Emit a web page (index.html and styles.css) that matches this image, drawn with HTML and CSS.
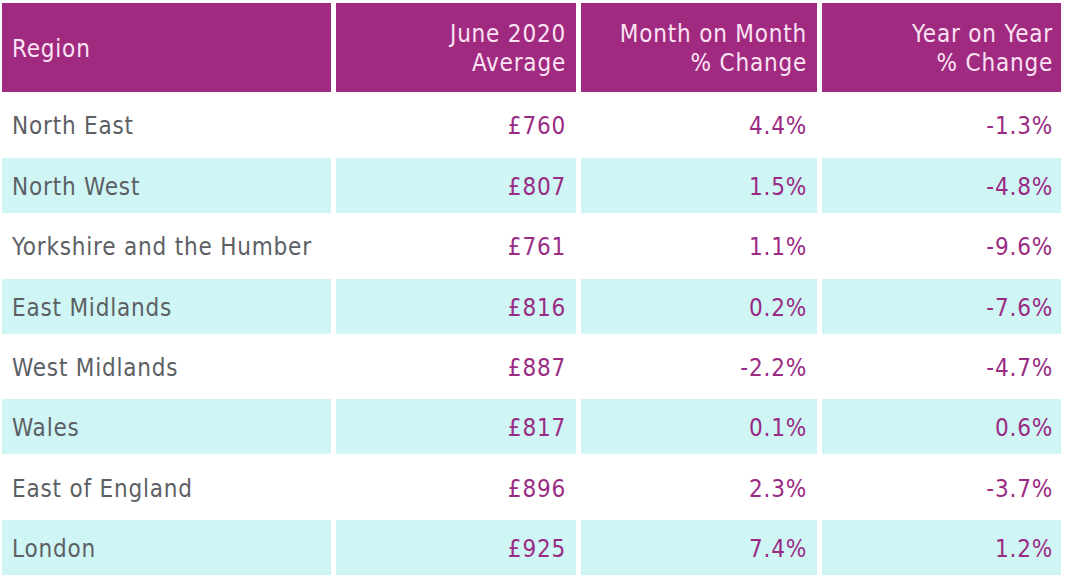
FILE: index.html
```html
<!DOCTYPE html>
<html lang="en">
<head>
<meta charset="utf-8">
<title>June 2020 Regional Averages</title>
<link rel="stylesheet" href="styles.css">
</head>
<body>
<div class="table">
  <div class="cell head">Region</div>
  <div class="cell head num">June 2020<br>Average</div>
  <div class="cell head num">Month on Month<br>% Change</div>
  <div class="cell head num last">Year on Year<br>% Change</div>

  <div class="cell name">North East</div>
  <div class="cell num val">£760</div>
  <div class="cell num val">4.4%</div>
  <div class="cell num val last">-1.3%</div>

  <div class="cell name alt">North West</div>
  <div class="cell num val alt">£807</div>
  <div class="cell num val alt">1.5%</div>
  <div class="cell num val alt last">-4.8%</div>

  <div class="cell name">Yorkshire and the Humber</div>
  <div class="cell num val">£761</div>
  <div class="cell num val">1.1%</div>
  <div class="cell num val last">-9.6%</div>

  <div class="cell name alt">East Midlands</div>
  <div class="cell num val alt">£816</div>
  <div class="cell num val alt">0.2%</div>
  <div class="cell num val alt last">-7.6%</div>

  <div class="cell name">West Midlands</div>
  <div class="cell num val">£887</div>
  <div class="cell num val">-2.2%</div>
  <div class="cell num val last">-4.7%</div>

  <div class="cell name alt">Wales</div>
  <div class="cell num val alt">£817</div>
  <div class="cell num val alt">0.1%</div>
  <div class="cell num val alt last">0.6%</div>

  <div class="cell name">East of England</div>
  <div class="cell num val">£896</div>
  <div class="cell num val">2.3%</div>
  <div class="cell num val last">-3.7%</div>

  <div class="cell name alt">London</div>
  <div class="cell num val alt">£925</div>
  <div class="cell num val alt">7.4%</div>
  <div class="cell num val alt last">1.2%</div>
</div>
</body>
</html>
```

FILE: styles.css
```css
html, body {
  margin: 0;
  padding: 0;
  background: #ffffff;
}

body {
  font-family: "DejaVu Sans Condensed", "DejaVu Sans", sans-serif;
  font-size: 24px;
  letter-spacing: 0.8px;
}

.table {
  display: grid;
  grid-template-columns: 329px 240px 236px 239px;
  grid-template-rows: 89px;
  grid-auto-rows: 55px;
  column-gap: 5px;
  row-gap: 5.4px;
  margin: 3px 0 0 2px;
}

.cell {
  display: flex;
  flex-direction: column;
  justify-content: center;
  padding: 4px 10px 0 10px;
  line-height: 29px;
  color: #5c6064;
}

.head {
  background: #a02a7f;
  color: #fbe3f4;
  padding-top: 3px;
}

.num {
  align-items: flex-end;
  text-align: right;
  padding-right: 10px;
}

.num.last {
  padding-right: 8px;
}

.val {
  color: #9a2b84;
}

.alt {
  background: #cff5f5;
}
```
